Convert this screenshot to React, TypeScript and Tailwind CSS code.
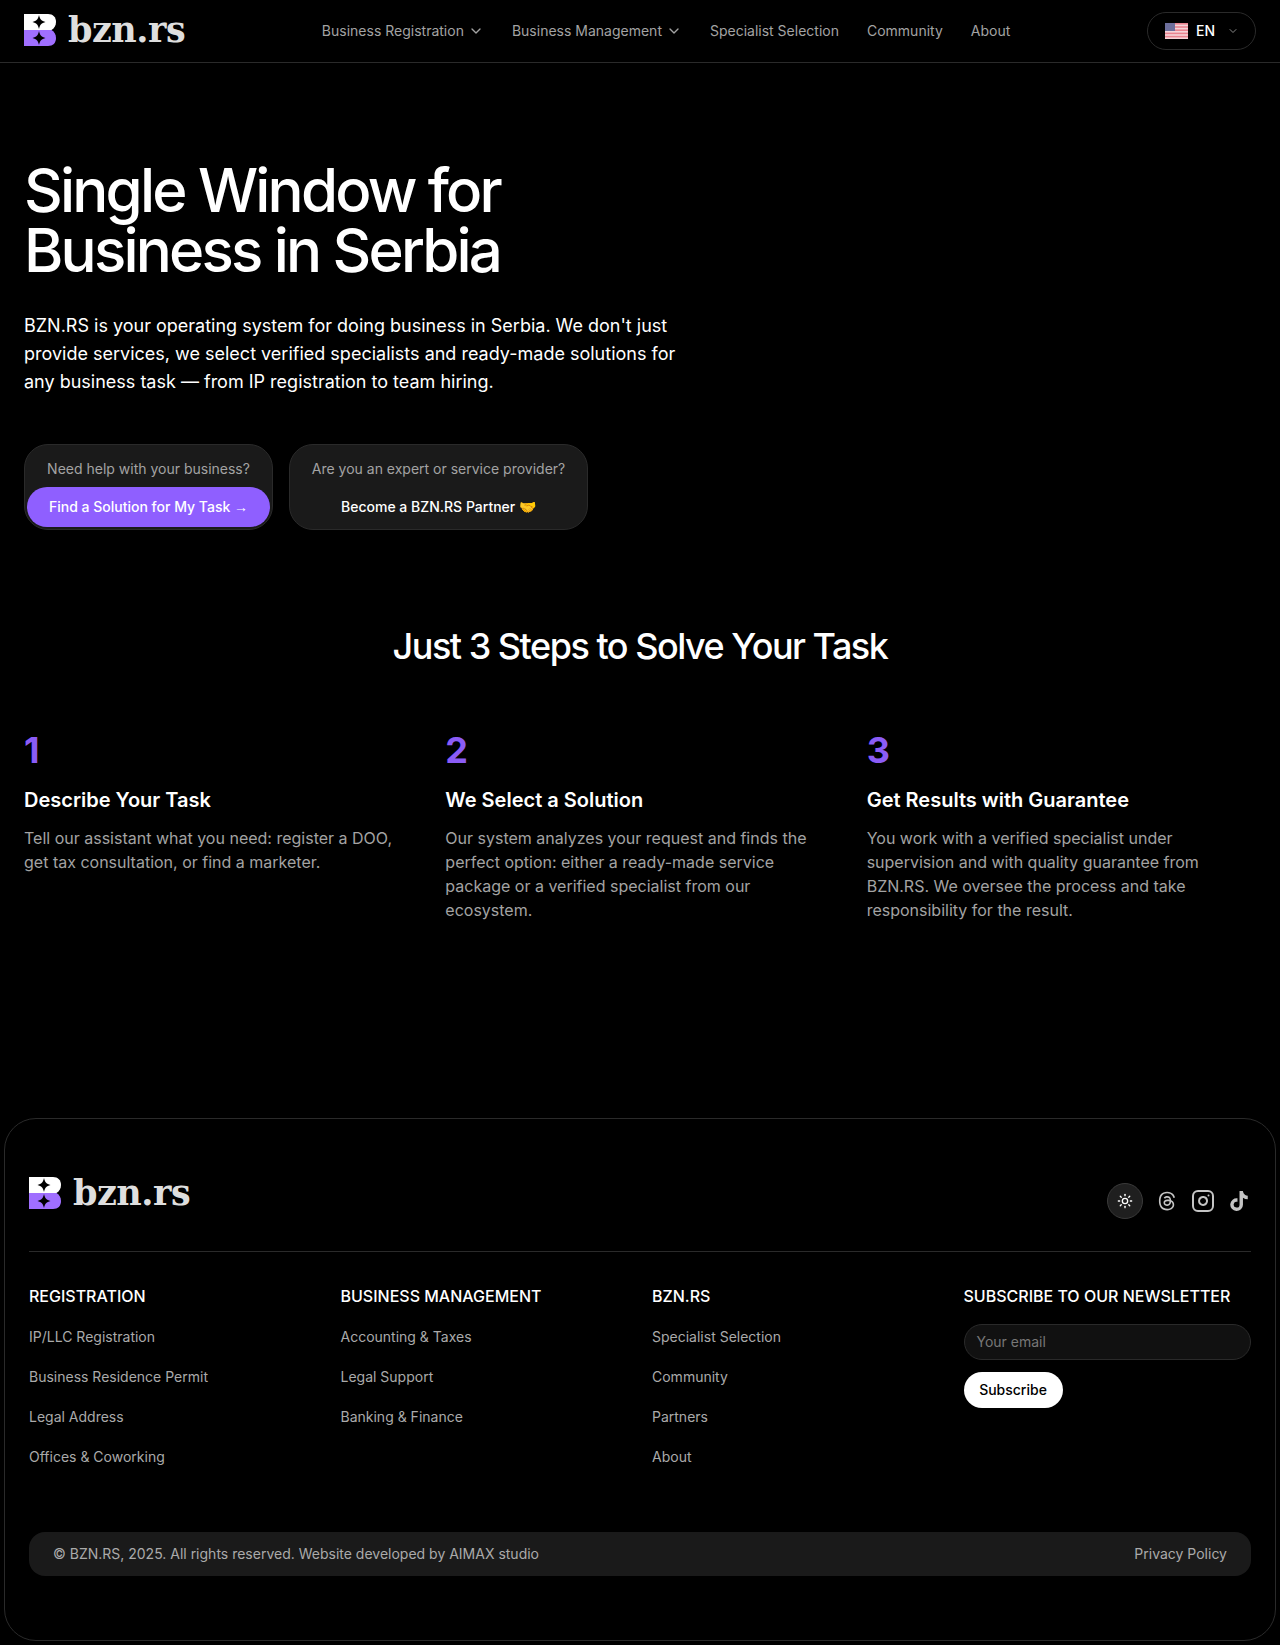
import { ChevronDown, Instagram, Sun } from 'lucide-react'
import { FaTiktok } from 'react-icons/fa'
import { FaThreads } from 'react-icons/fa6'

const steps = [
  {
    n: '1',
    title: 'Describe Your Task',
    text: 'Tell our assistant what you need: register a DOO, get tax consultation, or find a marketer.',
  },
  {
    n: '2',
    title: 'We Select a Solution',
    text: 'Our system analyzes your request and finds the perfect option: either a ready-made service package or a verified specialist from our ecosystem.',
  },
  {
    n: '3',
    title: 'Get Results with Guarantee',
    text: 'You work with a verified specialist under supervision and with quality guarantee from BZN.RS. We oversee the process and take responsibility for the result.',
  },
]

const footerCols = [
  {
    title: 'REGISTRATION',
    links: ['IP/LLC Registration', 'Business Residence Permit', 'Legal Address', 'Offices & Coworking'],
  },
  {
    title: 'BUSINESS MANAGEMENT',
    links: ['Accounting & Taxes', 'Legal Support', 'Banking & Finance'],
  },
  {
    title: 'BZN.RS',
    links: ['Specialist Selection', 'Community', 'Partners', 'About'],
  },
]

function LogoMark() {
  return (
    <svg width="32" height="32" viewBox="0 0 32 32" className="shrink-0">
      <path d="M0 0H24C29 0 32 3 32 8C32 11.5 30.5 14 27.5 16H0Z" fill="#ffffff" />
      <path d="M0 16H27.5C30.5 18 32 20.5 32 24C32 29 29 32 24 32H0Z" fill="#a06fff" />
      <path d="M15 1C16 5.5 17.5 7 21.5 8C17.5 9 16 10.5 15 15C14 10.5 12.5 9 8.5 8C12.5 7 14 5.5 15 1Z" fill="#000" />
      <path d="M15 17C16 21.5 17.5 23 21.5 24C17.5 25 16 26.5 15 31C14 26.5 12.5 25 8.5 24C12.5 23 14 21.5 15 17Z" fill="#000" />
    </svg>
  )
}

function Logo() {
  return (
    <div className="flex items-center gap-3">
      <LogoMark />
      <span className="font-['DejaVu_Serif',serif] text-[35px] leading-8 font-bold tracking-[-0.5px] text-[#dedede]">
        bzn.rs
      </span>
    </div>
  )
}

function UsFlag() {
  return (
    <svg width="23" height="16" viewBox="0 0 23 16">
      <rect width="23" height="16" fill="#f4d4d8" />
      <rect y="0" width="23" height="1.6" fill="#e8838f" />
      <rect y="3.2" width="23" height="1.6" fill="#e8838f" />
      <rect y="6.4" width="23" height="1.6" fill="#e8838f" />
      <rect y="9.6" width="23" height="1.6" fill="#e8838f" />
      <rect y="12.8" width="23" height="1.6" fill="#e8838f" />
      <rect width="10" height="8" fill="#6d6f9c" />
    </svg>
  )
}

export default function App() {
  return (
    <div className="min-h-[1645px] bg-black font-['Inter',sans-serif] text-white">
      {/* Header */}
      <header className="flex h-[63px] items-center justify-between border-b border-[#2a2a2a] px-6">
        <div className="mb-[3px]">
          <Logo />
        </div>
        <nav className="flex items-center gap-7 text-sm text-[#a3a3a3]">
          <span className="flex items-center gap-1">
            Business Registration <ChevronDown className="h-4 w-4" />
          </span>
          <span className="flex items-center gap-1">
            Business Management <ChevronDown className="h-4 w-4" />
          </span>
          <span>Specialist Selection</span>
          <span>Community</span>
          <span>About</span>
        </nav>
        <div className="flex h-[38px] w-[109px] items-center gap-2 rounded-full border border-[#2a2a2a] pl-[17px]">
          <UsFlag />
          <span className="text-sm font-medium">EN</span>
          <ChevronDown className="ml-1 h-3 w-3 text-[#888]" />
        </div>
      </header>

      <main className="px-6">
        {/* Hero */}
        <section className="pt-[97px]">
          <h1 className="text-[60px] leading-[60px] font-medium tracking-[-2.8px]">
            Single Window for
            <br />
            Business in Serbia
          </h1>
          <p className="mt-8 max-w-[672px] text-lg leading-7">
            BZN.RS is your operating system for doing business in Serbia. We don't just provide services, we select
            verified specialists and ready-made solutions for any business task — from IP registration to team hiring.
          </p>
          <div className="mt-12 flex gap-4">
            <div className="flex w-[249px] flex-col items-center rounded-[24px] border border-[#2a2a2a] bg-[#1a1a1a] px-[2px] pb-[2px]">
              <span className="mt-[14px] text-sm leading-5 text-[#a3a3a3]">Need help with your business?</span>
              <button className="mt-[8px] h-10 w-full rounded-full bg-[#8f5fff] text-sm font-medium text-white">
                Find a Solution for My Task <span className="font-['Liberation_Sans',sans-serif]">→</span>
              </button>
            </div>
            <div className="flex w-[299px] flex-col items-center rounded-[24px] border border-[#2a2a2a] bg-[#1a1a1a] px-[2px] pb-[2px]">
              <span className="mt-[14px] text-sm leading-5 text-[#a3a3a3]">Are you an expert or service provider?</span>
              <button className="mt-[8px] h-10 w-full rounded-full text-sm font-medium text-white">
                Become a BZN.RS Partner 🤝
              </button>
            </div>
          </div>
        </section>

        {/* Steps */}
        <section className="pt-[96px]">
          <h2 className="text-center text-4xl leading-10 font-medium tracking-[-1.5px]">Just 3 Steps to Solve Your Task</h2>
          <div className="mt-[64px] grid grid-cols-3 gap-8">
            {steps.map(step => (
              <div key={step.n}>
                <div className="text-4xl leading-10 font-bold text-[#8b5cf6]">{step.n}</div>
                <h3 className="mt-4 text-xl leading-7 font-semibold">{step.title}</h3>
                <p className="mt-3 text-base leading-6 text-[#a3a3a3]">{step.text}</p>
              </div>
            ))}
          </div>
        </section>
      </main>

      {/* Footer */}
      <footer className="mx-1 mt-[196px] h-[523px] rounded-[32px] border border-[#2a2a2a] px-6 pt-[58px]">
        <div className="flex items-end justify-between border-b border-[#2a2a2a] pb-[32px]">
          <div className="mb-[10px]">
            <Logo />
          </div>
          <div className="flex items-center gap-3">
            <div className="flex h-9 w-9 items-center justify-center rounded-full border border-[#3a3a3a] bg-[#1f1f1f]">
              <Sun className="h-4 w-4 text-white" />
            </div>
            <div className="flex h-6 w-6 items-center justify-center">
              <FaThreads className="h-5 w-5 text-[#c4c4c4]" />
            </div>
            <div className="flex h-6 w-6 items-center justify-center">
              <Instagram className="h-6 w-6 text-[#c4c4c4]" />
            </div>
            <div className="flex h-6 w-6 items-center justify-center">
              <FaTiktok className="h-5 w-5 text-[#c4c4c4]" />
            </div>
          </div>
        </div>

        <div className="mt-8 grid grid-cols-4 gap-6">
          {footerCols.map(col => (
            <div key={col.title}>
              <h4 className="text-base leading-6 font-medium">{col.title}</h4>
              <ul className="mt-[19px] flex flex-col gap-5 text-sm leading-5 text-[#aaaaaa]">
                {col.links.map(link => (
                  <li key={link}>{link}</li>
                ))}
              </ul>
            </div>
          ))}
          <div>
            <h4 className="text-base leading-6 font-medium">SUBSCRIBE TO OUR NEWSLETTER</h4>
            <div className="mt-[16px] flex h-9 items-center rounded-full border border-[#2a2a2a] bg-[#111111] px-3 text-sm text-[#777]">
              Your email
            </div>
            <button className="mt-3 h-9 w-[99px] rounded-full bg-white text-sm font-medium text-black">Subscribe</button>
          </div>
        </div>

        <div className="mt-[65px] flex h-11 items-center justify-between rounded-2xl bg-[#1a1a1a] px-6 text-sm text-[#aaaaaa]">
          <span>© BZN.RS, 2025. All rights reserved. Website developed by AIMAX studio</span>
          <span>Privacy Policy</span>
        </div>
      </footer>
    </div>
  )
}
